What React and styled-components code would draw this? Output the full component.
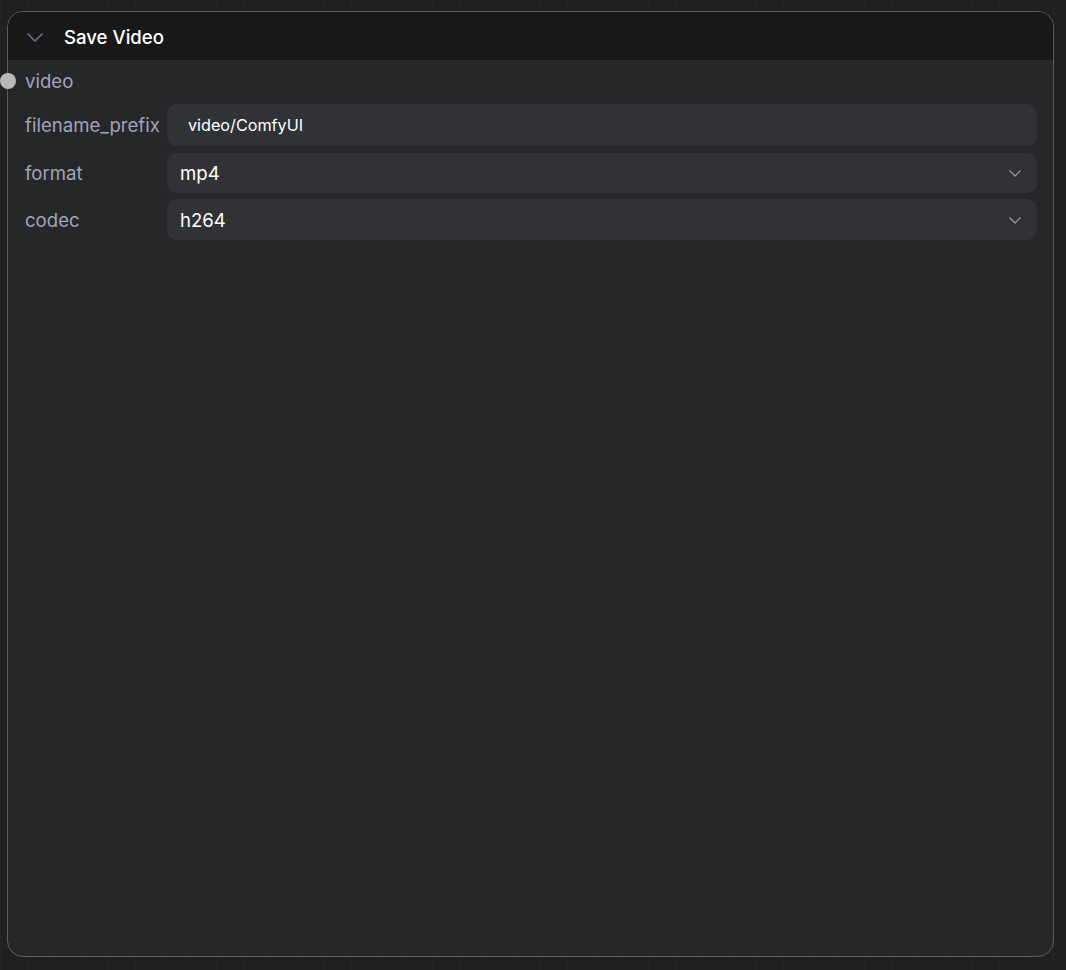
import React from "react";
import styled, { createGlobalStyle } from "styled-components";

const GlobalStyle = createGlobalStyle`
  html, body {
    margin: 0;
    padding: 0;
    height: 100%;
  }

  body {
    background-color: #202021;
    background-image:
      linear-gradient(to right, rgba(255, 255, 255, 0.018) 1px, transparent 1px),
      linear-gradient(to bottom, rgba(255, 255, 255, 0.018) 1px, transparent 1px);
    background-size: 27px 27px;
    font-family: Inter, "Noto Sans", "Liberation Sans", sans-serif;
    -webkit-font-smoothing: antialiased;
  }
`;

const Canvas = styled.div`
  padding: 11px 12px 13px 7px;
  height: 970px;
  box-sizing: border-box;
`;

const Node = styled.div`
  position: relative;
  height: 100%;
  box-sizing: border-box;
  background: #262729;
  border: 1px solid #5b5b63;
  border-radius: 16px;
  display: flex;
  flex-direction: column;
`;

const Header = styled.div`
  height: 48px;
  display: flex;
  align-items: center;
  gap: 17px;
  padding: 1px 0 0 15px;
  box-sizing: border-box;
  background: #181818;
  border-radius: 15px 15px 0 0;
  color: #ffffff;
  font-size: 18.6px;
  font-weight: 500;
`;

const Body = styled.div`
  display: flex;
  flex-direction: column;
  padding: 9px 16px 0 17px;
`;

const SlotRow = styled.div`
  position: relative;
  height: 24px;
  display: flex;
  align-items: center;
  margin-bottom: 11px;
`;

const SlotDot = styled.span`
  position: absolute;
  left: -25px;
  top: 50%;
  width: 16px;
  height: 16px;
  margin-top: -8px;
  border-radius: 50%;
  background: #b8b8b8;
`;

const Label = styled.span`
  color: #a3a3bb;
  font-size: 18.6px;
  white-space: nowrap;
`;

const WidgetRow = styled.div`
  display: grid;
  grid-template-columns: 142px 1fr;
  align-items: center;
  margin-bottom: ${(p) => p.$gap}px;
`;

const Field = styled.div`
  height: ${(p) => p.$h}px;
  display: flex;
  align-items: center;
  justify-content: space-between;
  padding: 0 13px 0 ${(p) => p.$pl}px;
  background: #313236;
  border-radius: 10px;
  color: #ffffff;
  font-size: ${(p) => p.$fs}px;
`;

const Chevron = ({ color, size = 18, width = 1.6 }) => (
  <svg width={size} height={size} viewBox="0 0 24 24" fill="none" stroke={color} strokeWidth={width} strokeLinecap="round" strokeLinejoin="round">
    <path d="M5 9l7 7 7-7" />
  </svg>
);

export default function App() {
  return (
    <>
      <GlobalStyle />
      <Canvas>
        <Node>
          <Header>
            <Chevron color="#6e6e8c" size={24} width={1.6} />
            <span>Save Video</span>
          </Header>
          <Body>
            <SlotRow>
              <SlotDot />
              <Label>video</Label>
            </SlotRow>
            <WidgetRow $gap={7}>
              <Label>filename_prefix</Label>
              <Field $h={42} $pl={21} $fs={16.2}>
                <span>video/ComfyUI</span>
              </Field>
            </WidgetRow>
            <WidgetRow $gap={6}>
              <Label>format</Label>
              <Field $h={40} $pl={13} $fs={18.6}>
                <span>mp4</span>
                <Chevron color="#9a9aa2" size={18} />
              </Field>
            </WidgetRow>
            <WidgetRow $gap={0}>
              <Label>codec</Label>
              <Field $h={41} $pl={13} $fs={18.6}>
                <span>h264</span>
                <Chevron color="#9a9aa2" size={18} />
              </Field>
            </WidgetRow>
          </Body>
        </Node>
      </Canvas>
    </>
  );
}
